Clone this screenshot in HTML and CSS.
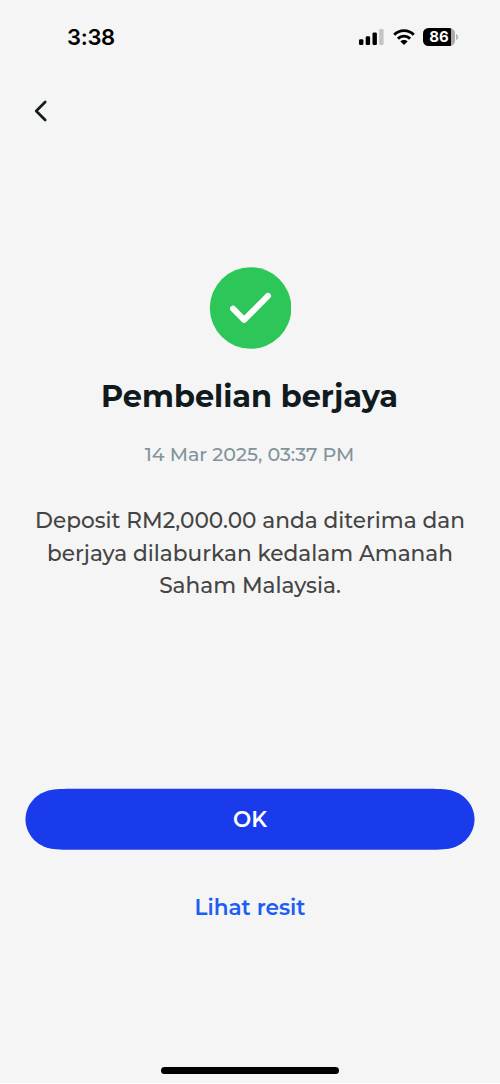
FILE: index.html
```html
<!DOCTYPE html>
<html lang="ms">
<head>
<meta charset="utf-8">
<meta name="viewport" content="width=device-width, initial-scale=1">
<title>Pembelian berjaya</title>
<link rel="stylesheet" href="styles.css">
</head>
<body>
<main class="screen">
  <header class="status">
    <span class="time">3:38</span>
    <div class="indicators">
      <svg class="signal" width="25" height="16" viewBox="0 0 25 16"><rect x="0" y="10.3" width="4.4" height="5.7" rx="1.3"/><rect x="6.7" y="7.3" width="4.4" height="8.7" rx="1.3"/><rect x="13.5" y="3.5" width="4.4" height="12.5" rx="1.3"/><rect x="20.2" y="0" width="4.4" height="16" rx="1.3" fill="#c4c4c4"/></svg>
      <svg class="wifi" width="22" height="16" viewBox="0 0 22 16"><g fill="none" stroke="#000" stroke-width="2.9"><path d="M1.2 5.7C6.7.2 15.3.2 20.8 5.7"/><path d="M4.9 9.6c3.4-3.3 8.8-3.3 12.2 0"/></g><path d="M11 16l-3.6-3.6c2-1.8 5.2-1.8 7.2 0z"/></svg>
      <div class="battery"><span class="level">86</span></div>
      <svg class="cap" width="3" height="6" viewBox="0 0 3 6"><path d="M0 0c3 1 3 5 0 6z" fill="#b5b5b5"/></svg>
    </div>
  </header>
  <nav class="nav">
    <svg width="14" height="22" viewBox="0 0 14 22"><path d="M11.2 2L2.2 11l9 9" fill="none" stroke="#101c1e" stroke-width="2.7" stroke-linecap="round" stroke-linejoin="round"/></svg>
  </nav>
  <section class="result">
    <svg class="check" width="82" height="82" viewBox="0 0 82 82"><circle cx="41.6" cy="41" r="40.8" fill="#2dc659"/><path d="M24 41.7L35.1 52.8 59 28.9" fill="none" stroke="#fff" stroke-width="6" stroke-linecap="round" stroke-linejoin="round"/></svg>
    <h1 class="title">Pembelian berjaya</h1>
    <p class="date">14 Mar 2025, 03:37 PM</p>
    <p class="message">Deposit RM2,000.00 anda diterima dan<br>berjaya dilaburkan kedalam Amanah<br>Saham Malaysia.</p>
  </section>
  <footer class="actions">
    <button class="ok">
      <svg class="ok-shape" width="450" height="62" viewBox="0 0 450 62"><path d="M54 .8H396C408 .8 417 1 424 1.9C438.5 4.5 449.5 16.5 449.5 31.3S438.5 58.1 424 60.7C417 61.6 408 61.8 396 61.8H54C42 61.8 33 61.6 26 60.7C11.5 58.1.5 46.1.5 31.3S11.5 4.5 26 1.9C33 1 42 .8 54 .8z" fill="#1a3beb"/></svg>
      <span class="ok-label">OK</span>
    </button>
    <a class="receipt">Lihat resit</a>
    <div class="home-bar"></div>
  </footer>
</main>
</body>
</html>
```

FILE: styles.css
```css
* { box-sizing: border-box; }
body { margin: 0; background: #fff; font-family: Montserrat, Inter, sans-serif; }
.screen { width: 500px; height: 1083px; background: #f5f5f5; display: flex; flex-direction: column; overflow: hidden; }
.status { height: 74px; padding: 0 41px 0 67px; display: flex; align-items: center; justify-content: space-between; font-family: Inter, sans-serif; }
.time { font-size: 22px; font-weight: 600; letter-spacing: -.3px; line-height: 26px; }
.indicators { display: flex; align-items: center; margin-right: -0.4px; }
.wifi { margin-left: 9px; }
.battery { width: 32px; height: 18px; margin-left: 8.6px; border-radius: 5.5px; background: linear-gradient(90deg, #000 28px, #aaa 28px); overflow: hidden; }
.level { display: block; width: 31px; text-align: center; color: #fff; font-size: 15px; font-weight: 700; line-height: 18px; }
.cap { margin-left: 1px; }
.nav { height: 73px; padding: 26px 34px 0; }
.nav svg { display: block; }
.result { height: 641px; padding-top: 120px; text-align: center; }
.check { display: block; margin: 0 auto; }
.title { margin: 28px 1px 0 0; font-size: 30.4px; line-height: 40px; font-weight: 700; color: #111b1e; }
.date { margin: 24px 1px 0 0; font-size: 19.1px; line-height: 27px; font-weight: 500; color: #81949b; }
.message { margin: 36px 0 0; font-size: 21.65px; line-height: 32.6px; font-weight: 500; color: #444; white-space: nowrap; }
.actions { display: flex; flex-direction: column; align-items: center; height: 295px; }
.ok { display: grid; width: 450px; height: 62px; padding: 0; border: 0; background: none; color: #fff; font: 600 21.6px/62px Montserrat, Inter, sans-serif; }
.ok-shape, .ok-label { grid-area: 1 / 1; }
.receipt { margin-top: 41px; font-size: 21.6px; line-height: 32px; font-weight: 600; color: #1b5df5; }
.home-bar { width: 178px; height: 6.5px; margin-top: 144px; border-radius: 4px; background: #000; }
```
